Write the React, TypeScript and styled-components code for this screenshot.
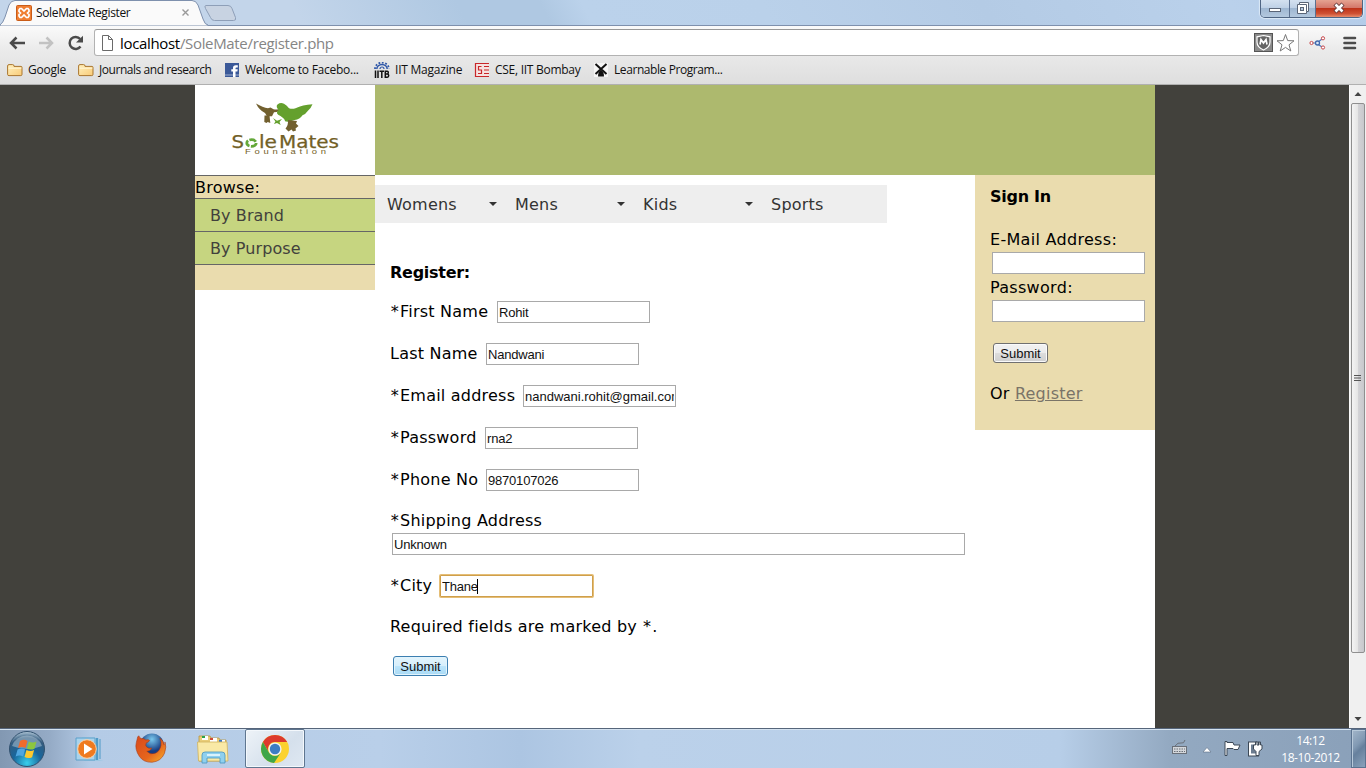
import React from 'react';
import styled, { createGlobalStyle } from 'styled-components';

const Global = createGlobalStyle`
  * { box-sizing: border-box; }
  html, body { margin: 0; padding: 0; }
  body { width: 1366px; height: 768px; overflow: hidden; }
  svg { display: block; flex: none; }
`;

const ui = `"Open Sans", "Noto Sans", sans-serif`;

const Screen = styled.div`
  width: 1366px;
  height: 768px;
  display: flex;
  flex-direction: column;
  overflow: hidden;
`;

/* ---------- window frame ---------- */
const TitleBar = styled.div`
  height: 25px;
  display: flex;
  justify-content: space-between;
  background: linear-gradient(62deg, #c3d5ea 0 22%, #afc8e2 34%, #afc8e2 40%, #bbd2eb 43%, #bad1ea 56%, #b4cbe5 72%, #bad1eb 90%, #b4cce9 100%);
`;
const TabStrip = styled.div`
  position: relative;
  width: 240px;
  height: 25px;
`;
const TabShape = styled.svg`
  position: absolute;
  left: 0;
  top: 0;
`;
const TabContent = styled.div`
  position: relative;
  height: 25px;
  padding-left: 16px;
  display: flex;
  align-items: center;
`;
const TabTitle = styled.span`
  font: 12px/16px ${ui};
  letter-spacing: -0.36px;
  color: #111;
  margin-left: 4px;
  width: 145px;
  white-space: nowrap;
`;
const WindowButtons = styled.div`
  display: flex;
  width: 103px;
  height: 18px;
  margin-right: 3px;
  border: 1px solid #4f6583;
  border-top: 0;
  border-radius: 0 0 5px 5px;
  overflow: hidden;
  box-shadow: 0 0 1px 1px #dce9f7;
`;
const WinButton = styled.div<{ $w: number; $close?: boolean }>`
  width: ${p => p.$w}px;
  display: flex;
  justify-content: center;
  border-left: ${p => (p.$w === 28 ? 0 : 1)}px solid #5b7090;
  background: ${p => p.$close
    ? 'linear-gradient(#e5a391, #d4786a 45%, #be3319 50%, #cf5133 80%, #e88c6c)'
    : 'linear-gradient(#d4e1f0, #bfd1e6 45%, #9fb7d2 50%, #b3c8de)'};
`;

/* ---------- toolbar ---------- */
const Toolbar = styled.div`
  height: 60px;
  border-top: 1px solid #7e90ad;
  border-bottom: 1px solid #b0b0b0;
  background: linear-gradient(#fafafa, #ebebeb 40%, #dedede);
`;
const NavRow = styled.div`
  height: 32px;
  padding: 3px 0 0 8px;
  display: flex;
  align-items: flex-start;
`;
const NavIcons = styled.div`
  display: flex;
  width: 86px;
  height: 27px;
  align-items: center;
  gap: 11px;
`;
const AddressBar = styled.div`
  width: 1205px;
  height: 27px;
  border: 1px solid #b2b2b2;
  border-top-color: #989898;
  border-radius: 3px;
  background: #fff;
  display: flex;
  align-items: center;
  padding: 0 3px 0 6px;
`;
const Url = styled.span`
  flex: 1;
  margin-left: 6px;
  font: 15px/22px ${ui};
  letter-spacing: -0.33px;
  color: #858585;
  b { font-weight: 400; color: #000; }
`;
const ToolIcons = styled.div`
  display: flex;
  align-items: center;
  height: 27px;
  margin-left: 10px;
  gap: 16px;
`;
const Bookmarks = styled.div`
  height: 25px;
  display: flex;
  align-items: center;
  padding: 0 0 1px 7px;
`;
const Bookmark = styled.div<{ $w: number; $ls?: number }>`
  width: ${p => p.$w}px;
  display: flex;
  align-items: center;
  gap: 5px;
  font: 12px/16px ${ui};
  letter-spacing: ${p => p.$ls ?? -0.22}px;
  color: #111;
  white-space: nowrap;
`;

/* ---------- page ---------- */
const Viewport = styled.div`
  height: 643px;
  display: flex;
  background: #42413c;
`;
const Page = styled.div`
  width: 960px;
  margin-left: 195px;
  background: #fff;
  font: 16px/22px Verdana, "DejaVu Sans", sans-serif;
  letter-spacing: 0.22px;
  color: #000;
`;
const Header = styled.div`
  height: 90px;
  display: flex;
  background: #adb96e;
`;
const LogoBox = styled.div`
  width: 180px;
  height: 90px;
  background: #fff;
  letter-spacing: normal;
`;
const Columns = styled.div`
  display: flex;
  align-items: flex-start;
`;
const Sidebar = styled.div`
  width: 180px;
  height: 115px;
  background: #eadcae;
  border-top: 1px solid #666;
`;
const Browse = styled.div`
  height: 23px;
  padding-top: 1px;
  line-height: 21px;
  border-bottom: 1px solid #666;
`;
const SideLink = styled.div`
  height: 33px;
  padding: 6px 0 0 15px;
  background: #c6d580;
  border-bottom: 1px solid #666;
  color: #42413c;
  letter-spacing: 0.1px;
`;
const Main = styled.div`
  width: 600px;
  padding-top: 10px;
`;
const Menu = styled.div`
  width: 512px;
  height: 38px;
  display: flex;
  background: #eee;
`;
const MenuItem = styled.div<{ $arrow: boolean }>`
  width: 128px;
  padding: 9px 6px 0 12px;
  color: #333;
  display: flex;
  justify-content: space-between;
  &::after {
    content: '';
    display: ${p => (p.$arrow ? 'block' : 'none')};
    margin-top: 8px;
    height: 4px;
    border: 4px solid transparent;
    border-top-color: #333;
    border-bottom: 0;
  }
`;
const Form = styled.div`
  padding: 39px 0 0 15px;
`;
const Heading = styled.div<{ $gap: number }>`
  font-weight: 700;
  letter-spacing: -0.27px;
  margin-bottom: ${p => p.$gap}px;
`;
const Row = styled.div`
  display: flex;
  height: 22px;
  margin-bottom: 20px;
`;
const Note = styled.div`
  height: 20px;
  line-height: 22px;
  margin: -1px 0 20px;
`;
const Star = styled.span`
  margin: 0 1px 0 0.8px;
`;
const Label = styled.span<{ $w?: number; $line?: number }>`
  display: block;
  width: ${p => (p.$w ? p.$w + 'px' : 'auto')};
  height: 21px;
  line-height: ${p => p.$line ?? 21}px;
  white-space: nowrap;
`;
const Field = styled.input<{ $w?: number; $focus?: boolean; $ls?: number }>`
  width: ${p => p.$w ?? 153}px;
  height: 22px;
  margin: 0;
  padding: 1px 1px 0;
  border: 1px solid ${p => (p.$focus ? '#cf9f4b' : '#a9a9a9')};
  box-shadow: ${p => (p.$focus ? '0 0 0 1px #e5be77' : 'none')};
  border-radius: ${p => (p.$focus ? 1 : 0)}px;
  outline: 0;
  background: #fff;
  color: #111;
  font: 13px "Liberation Sans", Arial, sans-serif;
  letter-spacing: ${p => p.$ls ?? -0.2}px;
`;
const FocusWrap = styled.div`
  position: relative;
`;
const Caret = styled.i`
  position: absolute;
  left: 37px;
  top: 4px;
  width: 1px;
  height: 15px;
  background: #000;
`;
const Submit = styled.button<{ $hot?: boolean }>`
  display: block;
  width: 55px;
  height: 20px;
  margin: 0 0 0 3px;
  padding: 0;
  border: 1px solid ${p => (p.$hot ? '#3c7fb1' : '#707070')};
  border-radius: 3px;
  box-shadow: inset 0 0 0 1px ${p => (p.$hot ? '#e2f4fd' : '#fafafa')};
  background: ${p => p.$hot
    ? 'linear-gradient(#e3f4fc, #d6effc 49%, #bce5fb 50%, #a9daf5)'
    : 'linear-gradient(#f2f2f2, #ebebeb 49%, #dddddd 50%, #cfcfcf)'};
  font: 13px/17px "Liberation Sans", Arial, sans-serif;
  letter-spacing: 0;
  color: #111;
`;
const SignIn = styled.div`
  width: 180px;
  height: 255px;
  padding: 11px 0 0 15px;
  background: #eadcae;
  letter-spacing: 0.3px;
`;
const Stack = styled.div`
  display: flex;
  flex-direction: column;
  margin-bottom: 19px;
  input { margin: 3px 0 2px 2px; }
`;
const AddressStack = styled.div`
  display: flex;
  flex-direction: column;
  margin: -1px 0 20px;
  input { margin: 2px 0 0 2px; }
`;
const OrLine = styled.div`
  margin-top: 20px;
  letter-spacing: 0.22px;
  span { color: #7a7468; text-decoration: underline; }
`;

/* ---------- scroll bar ---------- */
const ScrollBar = styled.div`
  width: 17px;
  margin-left: auto;
  display: flex;
  flex-direction: column;
  background: #f0f0f0;
  border-left: 1px solid #fafafa;
`;
const Thumb = styled.div`
  height: 550px;
  margin: 1px 1px auto 1px;
  border: 1px solid #8f8f8f;
  border-radius: 2px;
  display: flex;
  align-items: center;
  justify-content: center;
  background: linear-gradient(90deg, #f4f4f4, #e5e5e5 48%, #d3d3d6 52%, #c8c8cc);
`;

/* ---------- task bar ---------- */
const TaskBar = styled.div`
  height: 40px;
  display: flex;
  align-items: stretch;
  border-top: 1px solid #56657a;
  box-shadow: inset 0 1px 0 #d5e3f1;
  background: linear-gradient(90deg, #8298b2 0, #95abc6 50px, #b4cbe6 90px, #b9cfe9 380px, #acc5e2 520px, #bbd1ea 640px, #b7cee8 1060px, #93a9c1 1170px, #8aa0b9 1366px);
`;
const TaskSlot = styled.div<{ $w: number; $active?: boolean }>`
  width: ${p => p.$w}px;
  display: flex;
  align-items: center;
  justify-content: center;
  border: ${p => (p.$active ? '1px solid #5f7690' : '0')};
  border-radius: 2px;
  box-shadow: ${p => (p.$active ? 'inset 0 0 0 1px #f4f8fc' : 'none')};
  background: ${p => (p.$active ? 'linear-gradient(135deg, #eef3f8, #d5e0ec 60%, #dfe8f2)' : 'none')};
`;
const Tray = styled.div`
  margin-left: auto;
  display: flex;
  align-items: center;
`;
const Clock = styled.div`
  width: 80px;
  padding-right: 1px;
  text-align: center;
  font: 12px/17px ${ui};
  letter-spacing: -0.4px;
  color: #fff;
`;
const ShowDesktop = styled.div`
  width: 15px;
  align-self: stretch;
  border: 1px solid #5b7390;
  box-shadow: inset 1px 1px 0 #b7c9da;
  background: linear-gradient(135deg, #a3b6ca 0, #8199b3 40%, #66809d 55%, #8aa2bb);
`;

/* ---------- drawings ---------- */
const Folder = () => (
  <svg width="16" height="16" viewBox="0 0 16 16">
    <defs><linearGradient id="fold" x1="0" y1="0" x2="1" y2="1"><stop offset="0" stopColor="#fff0bd" /><stop offset="1" stopColor="#f9cb78" /></linearGradient></defs>
    <path d="M.6 12.5V4q0-1.4 1.4-1.4h3.6Q7 2.600 7 4v.4h7q1 0 1 1v7q0 1.200-1.200 1.200H2q-1.400 0-1.400-1.100z" fill="url(#fold)" stroke="#a9762f" />
    <path d="M1.500 6.200h12.800" stroke="#fff6d8" />
  </svg>
);
const FacebookIcon = () => (
  <svg width="16" height="16" viewBox="0 0 16 16">
    <path d="M1 1h14v14H1z" fill="#3b5998" /><path d="M1 12h14v2H1z" fill="#6d84b4" />
    <path d="M9 15V9.500H7.300V7.300H9V6q0-2.800 2.800-2.800h2v2.200h-1.300q-1 0-1 1v.9h2.200l-.3 2.200h-1.900V15z" fill="#fff" />
  </svg>
);
const IitbIcon = () => (
  <svg width="16" height="16" viewBox="0 0 16 16">
    <path d="M2.800 7a5.200 4.600 0 0 1 10.400 0" fill="none" stroke="#2f57a8" strokeWidth="1.500" />
    <path d="M1 7a7 6.400 0 0 1 14 0" fill="none" stroke="#2f57a8" strokeWidth="1.800" strokeDasharray="1.800 1.600" />
    <path d="M6 7a2 2 0 0 1 4 0" fill="none" stroke="#2f57a8" strokeWidth="1.200" />
    <path d="M1.500 8.500V16M4 8.500V16M5.500 9.200h4.500M7.800 9v7M11.300 8.500V16M11.300 9.200h2q1 0 1 1.400T13.300 12h-2M13.300 12q1.400 0 1.400 1.600t-1.400 1.600h-2" fill="none" stroke="#111" strokeWidth="1.500" />
  </svg>
);
const CseIcon = () => (
  <svg width="16" height="16" viewBox="0 0 16 16">
    <path d="M1 1h14v14H1z" fill="#f6e2e1" />
    <path d="M15 1.500H1.500v13H15M7.500 4.500h-3v3.500h3v3.500h-3.500M15 4.500H10M15 8H10M15 11.500H10" fill="none" stroke="#c8272a" strokeWidth="1.200" />
  </svg>
);
const LearnIcon = () => (
  <svg width="16" height="16" viewBox="0 0 16 16">
    <path d="M1 1h14v14H1z" fill="#f5f5f5" />
    <path d="M2.500 2l11 10M13.500 2l-11 10" stroke="#111" strokeWidth="2" />
    <path d="M5 14.500q0-5 3-6.500 3 1.500 3 6.500z" fill="#111" />
  </svg>
);
const Logo = () => (
  <svg width="180" height="90" viewBox="195 85 180 90">
    <path d="M256 103.500q7 4 12 4.800l2.500-.8 3 1.700q4 .8 9-.8-3 3.400-8.500 3.800l-2 4h-5l-2-3.200q-6-3-9-9.500z" fill="#72602f" />
    <path d="M264.500 115.500h5l.8 7.500-2.600-1-1.200 1-2.200-1z" fill="#72602f" />
    <path d="M278.500 110q-3-3.500-1-5.500 3-2.500 6.500-.8 3 1.500 5 4.500 3 1 6.500 0 7-3.500 17-4-1.500 4-5 7-1.500 2.500-5 4-2.500 4-8 4.800-6 2.500-9.500 1.300 0-2.500-4.500-5.300-6-2.500-2-6z" fill="#64a02d" />
    <path d="M273 118l4 2.800 5-1.800-2.500 3 1.200 3-3.700-2-3 1 1.400-2.500z" fill="#64a02d" />
    <path d="M288 120l9 1-1 2.500 2.500 2.500-3 2.500.5 2-3 1-1.500-2-3 2-3-3q3-3.500 2.500-8.500z" fill="#72602f" />
    <g fontFamily="DejaVu Sans" fontSize="17" fill="#726026" stroke="#726026" strokeWidth=".25">
      <text x="231.500" y="148" textLength="12.500" lengthAdjust="spacingAndGlyphs">S</text>
      <text x="259" y="148" textLength="18" lengthAdjust="spacingAndGlyphs">le</text>
      <text x="279" y="148" textLength="60" lengthAdjust="spacingAndGlyphs">Mates</text>
    </g>
    <ellipse cx="251.500" cy="143" rx="4.700" ry="3.300" fill="none" stroke="#64a83a" strokeWidth="2.800" strokeDasharray="6.800 1.400" />
    <text transform="translate(245 153.500) scale(1.500 1)" fontFamily="Liberation Sans" fontSize="6.300" textLength="54" lengthAdjust="spacing" fill="#726026">Foundation</text>
  </svg>
);
const StartOrb = () => (
  <svg width="38" height="38" viewBox="0 0 38 38">
    <defs><radialGradient id="orb" cx=".5" cy=".9" r=".9"><stop offset="0" stopColor="#39cfec" /><stop offset=".45" stopColor="#18669c" /><stop offset=".8" stopColor="#345c7f" /><stop offset="1" stopColor="#b6ccdc" /></radialGradient></defs>
    <circle cx="19" cy="19" r="17.500" fill="url(#orb)" stroke="#31516f" />
    <path d="M4 16a15.500 14 0 0 1 30 0q-15 6-30 0z" fill="#d8e6ef" opacity=".4" />
    <path d="M12 11q4-2.500 7.500 0l-2 7q-3.500-2-7.500 0z" fill="#ef6b2c" />
    <path d="M20.800 11.500q4 2 7.700 0l-2 7.200q-4 1.800-7.600-.2z" fill="#8cc63f" />
    <path d="M9.600 19.500q4-2 7.500 0l-2 7q-3.500-2-7.500 0z" fill="#4fa6e0" />
    <path d="M18.500 20q4 2 7.600 0l-2 7.200q-4 1.800-7.600-.2z" fill="#fdc92e" />
  </svg>
);
const MediaPlayer = () => (
  <svg width="30" height="26" viewBox="0 0 30 26">
    <path d="M7 1l17 1v22l5 1H9z" fill="#9cc8e3" /><path d="M21 2h2v22h-2zM24.500 3h1v20h-1z" fill="#4f9ac6" />
    <path d="M1 2h19v22H1z" fill="#a9d3ec" stroke="#5ba0ca" />
    <circle cx="12" cy="13" r="9.300" fill="#ef7a1f" stroke="#f9d3ac" /><path d="M9 7.500v11l8.500-5.500z" fill="#fff" />
  </svg>
);
const Firefox = () => (
  <svg width="34" height="34" viewBox="-1 0 36 36">
    <defs><radialGradient id="globe" cx=".5" cy=".25"><stop offset="0" stopColor="#79c8ed" /><stop offset="1" stopColor="#173c82" /></radialGradient><linearGradient id="fox" x1="0" y1="0" x2="1" y2="1"><stop offset="0" stopColor="#d9481b" /><stop offset=".6" stopColor="#e6661d" /><stop offset="1" stopColor="#f8b52c" /></linearGradient></defs>
    <circle cx="18" cy="14" r="12.500" fill="url(#globe)" />
    <path d="M2.500 7q0-2 1.500-3 1 2 2.500 3 3-.5 5 1.500 3-1 4 .5-1 2-3.500 2.500-1.500 3 .5 4.500 2 2 5.500 1-2 3.500-5.500 3.500 4 4 9 2 5-2 6-8 .8-4-1-8 4 3 4.300 7 1.200-1 1-3 2 5-.5 12-3.500 8.500-13 9.500-9 .5-13.500-6Q-.5 18 1.500 11z" fill="url(#fox)" stroke="#a83813" strokeWidth=".6" />
  </svg>
);
const Explorer = () => (
  <svg width="38" height="32" viewBox="-4 0 38 32">
    <path d="M3 3h11l1 2h8l1 2h6v21H3z" fill="#e9cd78" stroke="#b7943f" strokeWidth=".8" />
    <path d="M6 3h6v4H6zM14 5h7v4h-7zM23 7h6v3h-6z" fill="#fff" /><path d="M6 3h3v2H6z" fill="#2aa34a" /><path d="M14 5h3v2h-3z" fill="#cf4b36" /><path d="M23 7h3v2h-3z" fill="#3b79c9" />
    <path d="M1.500 9h29.500l1 19H2.500z" fill="#f9e9a6" stroke="#d0b25d" strokeWidth=".8" />
    <path d="M6 30V22q0-3 3-3h17q3 0 3 3v8h-5v-5H11v5z" fill="#8fd0ee" stroke="#4796bf" strokeWidth=".8" />
    <path d="M11 22h13" stroke="#d9f2fc" strokeWidth="2" />
  </svg>
);
const Chrome = () => (
  <svg width="30" height="30" viewBox="0 0 30 30">
    <circle cx="15" cy="15" r="14" fill="#fbd22f" />
    <path d="M2.900 8A14 14 0 0 1 27.200 8H15a7 7 0 0 0-6.100 10.500z" fill="#dd3a2d" />
    <path d="M2.900 8A14 14 0 0 0 14 29l7-10.500a7 7 0 0 1-12.100 0z" fill="#3fa648" />
    <circle cx="15" cy="15" r="6.600" fill="#f2f2f2" /><circle cx="15" cy="15" r="5.200" fill="#3d7cc4" />
  </svg>
);

type FieldSpec = { label: string; value: string; width: number; required: boolean; spacing?: number };
const fields: FieldSpec[] = [
  { label: 'First Name', value: 'Rohit', width: 107, required: true },
  { label: 'Last Name', value: 'Nandwani', width: 96, required: false },
  { label: 'Email address', value: 'nandwani.rohit@gmail.com', width: 133, required: true, spacing: 0 },
  { label: 'Password', value: 'rna2', width: 95, required: true },
  { label: 'Phone No', value: '9870107026', width: 96, required: true },
];

export default function App() {
  return (
    <Screen>
      <Global />
      <TitleBar>
        <TabStrip>
          <TabShape width="240" height="26" viewBox="0 0 240 26">
            <path d="M0 25Q3 23 5 17L9 5q2-4.500 6-4.500h177q4 0 6 4.500l5 14q2 6 5 6V26H0z" fill="#fafafa" stroke="#7e90ad" />
            <path d="M206 5.500h22q3 0 4 3l3.500 9q1 3-2 3h-19q-3 0-4-3l-5-9q-1.500-3 .5-3z" fill="#c8d3e2" stroke="#8e9fb8" />
          </TabShape>
          <TabContent>
            <svg width="16" height="16" viewBox="0 0 16 16">
              <rect x=".5" y=".5" width="15" height="15" rx="1" fill="#f07e31" stroke="#c95c18" />
              <path d="M4 3.500h1.500L8 6l2.500-2.500H12L13 5v1.500L11.500 8 13 9.500V11l-1 1.500h-1.500L8 10l-2.500 2.500H4L3 11V9.500L4.500 8 3 6.500V5z" fill="none" stroke="#fff" strokeWidth="1.700" />
            </svg>
            <TabTitle>SoleMate Register</TabTitle>
            <svg width="9" height="9" viewBox="0 0 9 9"><path d="M1.500 1.500l6 6M7.500 1.500l-6 6" stroke="#999" strokeWidth="1.400" /></svg>
          </TabContent>
        </TabStrip>
        <WindowButtons>
          <WinButton $w={28}><svg width="14" height="16" viewBox="0 0 14 16"><rect x="1.500" y="8.500" width="11" height="3" fill="#fff" stroke="#5a6577" /></svg></WinButton>
          <WinButton $w={27}><svg width="14" height="16" viewBox="0 0 14 16"><path d="M3.500 2.500h9v9h-2v2h-9v-9h2z" fill="#fff" stroke="#5a6577" /><rect x="4.500" y="7.500" width="3" height="3" fill="#b6c8dc" stroke="#5a6577" /><path d="M3.500 4.500h7v7" fill="none" stroke="#5a6577" /></svg></WinButton>
          <WinButton $w={47} $close><svg width="14" height="16" viewBox="0 0 14 16"><path d="M3 4l8 8M11 4l-8 8" stroke="#663c3c" strokeWidth="4.400" /><path d="M3.500 4.500l7 7M10.500 4.500l-7 7" stroke="#fff" strokeWidth="2.600" /></svg></WinButton>
        </WindowButtons>
      </TitleBar>
      <Toolbar>
        <NavRow>
          <NavIcons>
            <svg width="18" height="16" viewBox="0 0 18 16"><path d="M8.500 2.500L3 8l5.500 5.500M3 8h14" fill="none" stroke="#4a4a4a" strokeWidth="2.500" /></svg>
            <svg width="18" height="16" viewBox="0 0 18 16"><path d="M9.500 2.500L15 8l-5.500 5.500M15 8H2" fill="none" stroke="#c2c2c2" strokeWidth="2.500" /></svg>
            <svg width="18" height="16" viewBox="0 0 18 16"><path d="M14.500 11.500A6 6 0 1 1 14.200 4" fill="none" stroke="#4a4a4a" strokeWidth="2.500" /><path d="M17 .8v6.700h-7z" fill="#4a4a4a" /></svg>
          </NavIcons>
          <AddressBar>
            <svg width="13" height="16" viewBox="0 0 13 16"><path d="M1.500.5h6l4 4v11h-10zM7.500.5v4h4" fill="#fff" stroke="#6a6a6a" /></svg>
            <Url><b>localhost</b>/SoleMate/register.php</Url>
            <svg width="20" height="20" viewBox="0 0 20 20">
              <rect x=".5" y=".5" width="18" height="18" fill="#8a8a8a" stroke="#555" />
              <path d="M9.500 2.500l6.500 1.300V9q0 5-6.500 8Q3 14 3 9V3.800z" fill="#666" stroke="#fff" strokeWidth="1.200" />
              <path d="M6 11.500l1-5 2.500 3.500L12 6.500l1 5" fill="none" stroke="#fff" strokeWidth="1.700" />
            </svg>
            <svg width="21" height="20" viewBox="0 0 21 20"><path d="M11.500 1.500l2.200 6.100 6.300.2-5 4 1.800 6.200-5.300-3.600L6.200 18 8 11.800l-5-4 6.300-.2z" fill="#fff" stroke="#777" strokeLinejoin="round" /></svg>
          </AddressBar>
          <ToolIcons>
            <svg width="18" height="16" viewBox="0 0 18 16"><path d="M3 8h5l5-4M8.500 9l4.500 3" fill="none" stroke="#4b78bd" strokeWidth="1.200" /><circle cx="8.500" cy="8" r="2" fill="#dbe8f7" stroke="#4169ad" strokeWidth="1.300" /><circle cx="2.500" cy="8" r="1.600" fill="#fff" stroke="#c7494c" /><circle cx="14" cy="3.300" r="1.600" fill="#fff" stroke="#c7494c" /><circle cx="14" cy="12.500" r="1.600" fill="#fff" stroke="#c7494c" /></svg>
            <svg width="14" height="14" viewBox="0 0 14 14"><path d="M1.500 2h10.500M1.500 7h10.500M1.500 12h10.500" stroke="#4c4c4c" strokeWidth="2.600" strokeLinecap="round" /></svg>
          </ToolIcons>
        </NavRow>
        <Bookmarks>
          <Bookmark $w={71}><Folder />Google</Bookmark>
          <Bookmark $w={146} $ls={-0.45}><Folder />Journals and research</Bookmark>
          <Bookmark $w={150} $ls={-0.25}><FacebookIcon />Welcome to Facebo...</Bookmark>
          <Bookmark $w={100}><IitbIcon />IIT Magazine</Bookmark>
          <Bookmark $w={119} $ls={-0.27}><CseIcon />CSE, IIT Bombay</Bookmark>
          <Bookmark $w={150} $ls={-0.42}><LearnIcon />Learnable Program...</Bookmark>
        </Bookmarks>
      </Toolbar>
      <Viewport>
        <Page>
          <Header><LogoBox><Logo /></LogoBox></Header>
          <Columns>
            <Sidebar>
              <Browse>Browse:</Browse>
              <SideLink>By Brand</SideLink>
              <SideLink>By Purpose</SideLink>
            </Sidebar>
            <Main>
              <Menu>
                {['Womens', 'Mens', 'Kids', 'Sports'].map((m, i) => <MenuItem key={m} $arrow={i < 3}>{m}</MenuItem>)}
              </Menu>
              <Form>
                <Heading $gap={17}>Register:</Heading>
                {fields.map(f => (
                  <Row key={f.label}>
                    <Label $w={f.width}>{f.required && <Star>*</Star>}{f.label}</Label>
                    <Field defaultValue={f.value} $ls={f.spacing} />
                  </Row>
                ))}
                <AddressStack>
                  <Label><Star>*</Star>Shipping Address</Label>
                  <Field $w={573} defaultValue="Unknown" />
                </AddressStack>
                <Row>
                  <Label $w={50}><Star>*</Star>City</Label>
                  <FocusWrap><Field $focus defaultValue="Thane" /><Caret /></FocusWrap>
                </Row>
                <Note>Required fields are marked by <Star>*</Star>.</Note>
                <Submit $hot>Submit</Submit>
              </Form>
            </Main>
            <SignIn>
              <Heading $gap={20}>Sign In</Heading>
              <Stack>
                <Label $line={23}>E-Mail Address:</Label><Field />
                <Label $line={23}>Password:</Label><Field />
              </Stack>
              <Submit>Submit</Submit>
              <OrLine>Or <span>Register</span></OrLine>
            </SignIn>
          </Columns>
        </Page>
        <ScrollBar>
          <svg width="16" height="17" viewBox="0 0 16 17"><path d="M4.500 11l3.500-4 3.500 4z" fill="#444" /></svg>
          <Thumb><svg width="8" height="8" viewBox="0 0 8 8"><path d="M0 1.500h7M0 4h7M0 6.500h7" stroke="#555" /></svg></Thumb>
          <svg width="16" height="17" viewBox="0 0 16 17"><path d="M4.500 6l3.500 4 3.500-4z" fill="#444" /></svg>
        </ScrollBar>
      </Viewport>
      <TaskBar>
        <TaskSlot $w={54}><StartOrb /></TaskSlot>
        <TaskSlot $w={71}><MediaPlayer /></TaskSlot>
        <TaskSlot $w={52}><Firefox /></TaskSlot>
        <TaskSlot $w={68}><Explorer /></TaskSlot>
        <TaskSlot $w={60} $active><Chrome /></TaskSlot>
        <Tray>
          <svg width="104" height="24" viewBox="0 0 104 24">
            <rect x="5.500" y="9.500" width="14" height="7" fill="#d4d7db" stroke="#6a7079" /><path d="M7 12h11M7 14.500h11" stroke="#6a7079" strokeDasharray="1.500 1" /><path d="M8 9q3-4 6-3t4-3" fill="none" stroke="#6a7079" />
            <path d="M36 15l4-4.500 4 4.500z" fill="#fff" stroke="#5a6d84" strokeWidth=".6" />
            <path d="M58 4.500h2v1h6l1 2.500h6l-2 4.500h-4l-1-1h-6v7h-2z" fill="#fff" stroke="#3c4856" />
            <path d="M83 6.500h7v11h-7z" fill="none" stroke="#3c4856" strokeWidth="4" /><path d="M83 6.500h7v11h-7z" fill="#6b7c90" stroke="#fff" strokeWidth="2" /><path d="M88.500 5v3h-2v4l2.500 2.500v4h3v-4l3-2.500V8h-1.500V5h-1.500v3h-2V5z" fill="#fff" stroke="#3c4856" />
          </svg>
          <Clock>14:12<br />18-10-2012</Clock>
          <ShowDesktop />
        </Tray>
      </TaskBar>
    </Screen>
  );
}
